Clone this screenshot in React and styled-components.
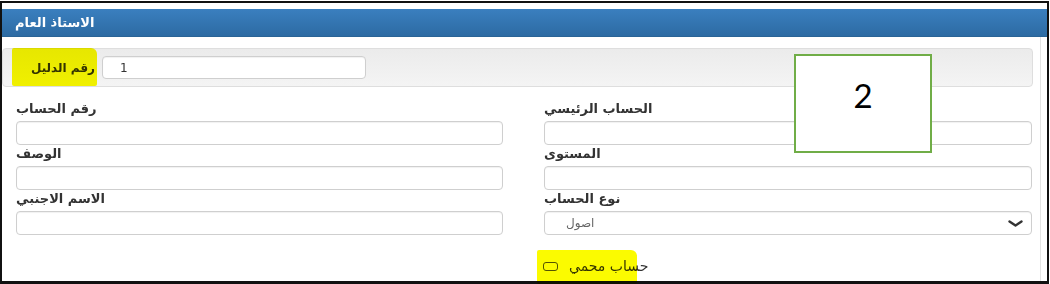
import React from 'react';
import styled, { createGlobalStyle } from 'styled-components';

const GlobalStyle = createGlobalStyle`
  html, body {
    margin: 0;
    padding: 0;
    background: #fff;
  }
  body {
    width: 1050px;
    height: 284px;
    overflow: hidden;
    font-family: "DejaVu Sans", "Liberation Sans", sans-serif;
  }
`;

const Screen = styled.div`
  position: relative;
  width: 1050px;
  height: 284px;
  padding-top: 1px;
  box-sizing: border-box;
`;

const Frame = styled.div`
  width: 1049px;
  height: 283px;
  box-sizing: border-box;
  border: 2px solid #111;
  border-bottom-width: 3px;
  padding-top: 6px;
  overflow: hidden;
`;

const Header = styled.div`
  height: 28px;
  display: flex;
  align-items: center;
  padding-left: 13px;
  background: linear-gradient(#3a7fbf, #2d6ba3);
  border-bottom: 1px solid #2a6496;
  box-sizing: border-box;
  color: #fff;
  font-size: 13px;
  font-weight: bold;
`;

const Body = styled.div`
  margin-right: 6px;
  padding: 11px 7px 0 0;
  border-right: 1px solid #e3e3e3;
  height: 260px;
  box-sizing: border-box;
`;

const Well = styled.div`
  height: 39px;
  box-sizing: border-box;
  display: flex;
  align-items: center;
  gap: 7px;
  padding-left: 28px;
  border: 1px solid #dedede;
  border-radius: 4px;
  background: linear-gradient(#ebebeb, #f4f4f4);
`;

const Label = styled.label`
  display: block;
  font-size: ${p => (p.$inline ? '12px' : '13px')};
  font-weight: bold;
  color: #333;
  line-height: 18px;
  margin-bottom: ${p => (p.$inline ? '0' : '3px')};
`;

const TextInput = styled.div`
  width: ${p => p.$width || '100%'};
  height: ${p => p.$height || '24px'};
  box-sizing: border-box;
  display: flex;
  align-items: center;
  justify-content: space-between;
  padding: 0 8px 0 ${p => p.$pad || '12px'};
  border: 1px solid #cfcfcf;
  border-radius: 4px;
  background: #fff;
  box-shadow: inset 0 1px 1px rgba(0, 0, 0, 0.06);
  font-size: 12px;
  color: ${p => p.$muted ? '#666' : '#333'};
`;

const Form = styled.div`
  display: grid;
  grid-template-columns: 487px 488px;
  column-gap: 41px;
  padding-left: 14px;
  margin-top: 13px;
`;

const Field = styled.div`
  display: flex;
  flex-direction: column;
`;

const CheckRow = styled.div`
  grid-column: 2;
  margin-top: 21px;
  margin-left: -1px;
  height: 20px;
  display: flex;
  align-items: center;
  gap: 11px;
  font-size: 14px;
  color: #333;
`;

const CheckBox = styled.span`
  width: 15px;
  height: 9px;
  box-sizing: border-box;
  border: 1.5px solid #555;
  border-radius: 3px;
  background: #fff;
`;

const Highlight = styled.span`
  position: absolute;
  left: ${p => p.$x}px;
  top: ${p => p.$y}px;
  width: ${p => p.$w}px;
  height: ${p => p.$h}px;
  background: #fbfb00;
  mix-blend-mode: multiply;
  border-radius: 2px 6px 2px 2px;
  pointer-events: none;
`;

const Callout = styled.div`
  position: absolute;
  left: 794px;
  top: 54px;
  width: 138px;
  height: 99px;
  box-sizing: border-box;
  border: 2px solid #70ad47;
  background: #fff;
  display: flex;
  justify-content: center;
  padding-top: 23px;
  font-family: Lato, "Liberation Sans", sans-serif;
  font-size: 33px;
  line-height: 33px;
  color: #000;
`;

const Chevron = () => (
  <svg width="15" height="7" viewBox="0 0 15 7">
    <polyline points="1.5,1.5 7.5,5.5 13.5,1.5" fill="none" stroke="#333" strokeWidth="2.4" strokeLinecap="round" strokeLinejoin="round" />
  </svg>
);

const fields = [
  { label: 'رقم الحساب' },
  { label: 'الحساب الرئيسي' },
  { label: 'الوصف' },
  { label: 'المستوى' },
  { label: 'الاسم الاجنبي' },
  { label: 'نوع الحساب', select: 'اصول' },
];

const App = () => {
  return (
    <>
      <GlobalStyle />
      <Screen>
        <Frame>
          <Header>الاستاذ العام</Header>
          <Body>
            <Well>
              <Label $inline>رقم الدليل</Label>
              <TextInput $width="264px" $height="23px" $pad="17px">1</TextInput>
            </Well>
            <Form>
              {fields.map(f => (
                <Field key={f.label}>
                  <Label>{f.label}</Label>
                  {f.select ? (
                    <TextInput $pad="21px" $muted>
                      <span>{f.select}</span>
                      <Chevron />
                    </TextInput>
                  ) : (
                    <TextInput />
                  )}
                </Field>
              ))}
              <CheckRow>
                <CheckBox />
                <span>حساب محمي</span>
              </CheckRow>
            </Form>
          </Body>
        </Frame>
        <Highlight $x={12} $y={48} $w={85} $h={38} />
        <Highlight $x={537} $y={250} $w={100} $h={34} />
        <Callout>2</Callout>
      </Screen>
    </>
  );
};

export default App;
